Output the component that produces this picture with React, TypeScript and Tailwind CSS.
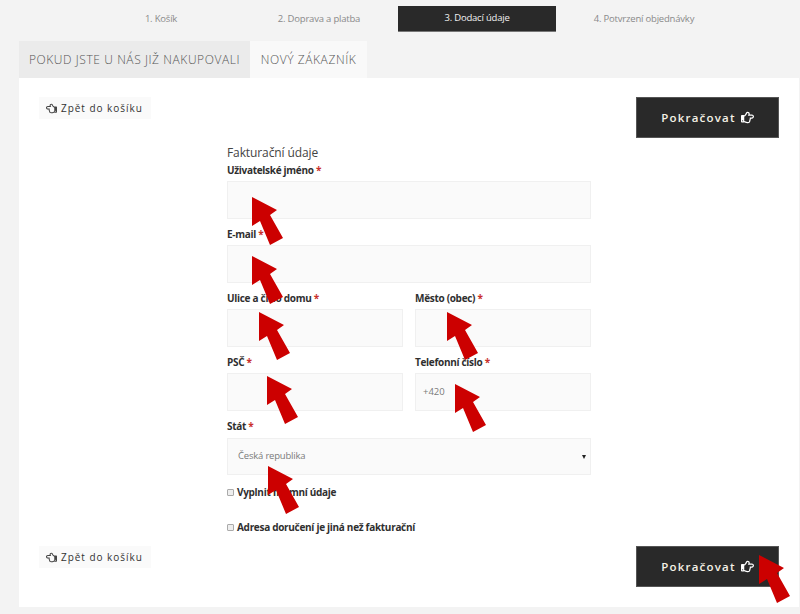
import { FC } from "react";
import { FaRegHandPointLeft, FaRegHandPointRight } from "react-icons/fa";

const font = { fontFamily: '"Open Sans", sans-serif' };

const BackLink: FC = () => (
  <a className="flex h-[22px] w-[112px] items-center gap-[4px] whitespace-nowrap bg-[#fafafa] pl-[7px] text-[10px] tracking-[0.96px] text-[#333]">
    <FaRegHandPointLeft className="h-[11px] w-[11px] shrink-0 text-[#444]" />
    <span>Zpět do košíku</span>
  </a>
);

const NextButton: FC = () => (
  <a className="flex h-[41px] w-[143px] items-center justify-center gap-[5px] border border-[#555] bg-[#292929] text-[11.5px] font-semibold tracking-[1.2px] text-[#f5f1e6]">
    <span>Pokračovat</span>
    <FaRegHandPointRight className="h-[13px] w-[13px] text-white" />
  </a>
);

const Field: FC<{ label: string; value?: string; className?: string }> = ({ label, value, className }) => (
  <div className={className}>
    <label className="block h-[16px] text-[10px] leading-[14px] font-bold tracking-[-0.3px] text-[#2f2f2f]">
      {label} <span className="text-[#c9302c]">*</span>
    </label>
    <div className="mt-[2px] flex h-[38px] items-center border border-[#f0f0f0] bg-[#fafafa] pl-[7px] pt-[1px] text-[9.5px] text-[#7a7a7a]">
      {value}
    </div>
  </div>
);

const Check: FC<{ label: string }> = ({ label }) => (
  <div className="flex h-[16px] items-center gap-[3px] text-[10px] leading-[14px] font-bold tracking-[-0.3px] text-[#2f2f2f]">
    <span className="h-[7px] w-[7px] rounded-[1px] border border-[#aaa] bg-[#eee]" />
    <span>{label}</span>
  </div>
);

const arrows = [
  [252, 197],
  [252, 256],
  [259, 312],
  [447, 312],
  [267, 376],
  [455, 384],
  [268, 466],
  [759, 555],
];

const App: FC = () => {
  return (
    <div className="relative h-[614px] w-[800px] overflow-hidden bg-[#f3f3f3]" style={font}>
      <div className="flex h-[41px] pl-[82px] pt-[6px] text-[9.5px] tracking-[-0.2px] text-[#8a8a8a]">
        <div className="flex h-[26px] w-[158px] items-center justify-center">1. Košík</div>
        <div className="flex h-[26px] w-[158px] items-center justify-center">2. Doprava a platba</div>
        <div className="flex h-[26px] w-[158px] items-center justify-center border-b border-[#777] bg-[#292929] text-[#f2f2f2]">
          3. Dodací údaje
        </div>
        <div className="flex h-[26px] w-[176px] items-center justify-center">4. Potvrzení objednávky</div>
      </div>

      <div className="ml-[19px] flex h-[37px] text-[12px] font-light tracking-[0.58px] uppercase text-[#555]">
        <div className="flex w-[231px] items-center justify-center bg-[#ebebeb]">Pokud jste u nás již nakupovali</div>
        <div className="flex w-[117px] items-center justify-center bg-[#f9f9f9]">Nový zákazník</div>
      </div>

      <div className="ml-[19px] h-[529px] w-[780px] bg-white px-[20px] pt-[19px]">
        <div className="flex items-start justify-between">
          <BackLink />
          <NextButton />
        </div>

        <div className="ml-[188px] mt-[5px] w-[364px]">
          <h3 className="h-[19px] text-[12px] leading-[19px] tracking-[-0.1px] text-[#444]">Fakturační údaje</h3>
          <div className="mt-[1px] flex flex-col gap-[8px]">
            <Field label="Uživatelské jméno" />
            <Field label="E-mail" />
            <div className="flex gap-[12px]">
              <Field label="Ulice a číslo domu" className="w-[176px]" />
              <Field label="Město (obec)" className="w-[176px]" />
            </div>
            <div className="flex gap-[12px]">
              <Field label="PSČ" className="w-[176px]" />
              <Field label="Telefonní číslo" value="+420" className="w-[176px]" />
            </div>
            <div>
              <label className="block h-[16px] text-[10px] leading-[14px] font-bold tracking-[-0.3px] text-[#2f2f2f]">
                Stát <span className="text-[#c9302c]">*</span>
              </label>
              <div className="mt-[3px] flex h-[37px] items-center justify-between border border-[#f0f0f0] bg-[#fafafa] pl-[10px] pr-[4px] text-[9.5px] tracking-[-0.2px] text-[#7a7a7a]">
                <span>Česká republika</span>
                <span className="h-0 w-0 border-x-[2.5px] border-t-[4px] border-x-transparent border-t-[#222]" />
              </div>
            </div>
          </div>
          <div className="mt-[9px] flex flex-col gap-[19px]">
            <Check label="Vyplnit firemní údaje" />
            <Check label="Adresa doručení je jiná než fakturační" />
          </div>
        </div>

        <div className="mt-[11px] flex items-start justify-between">
          <BackLink />
          <NextButton />
        </div>
      </div>

      {/* red annotation arrows lying over the form */}
      <svg className="absolute left-0 top-0 h-[614px] w-[800px]" viewBox="0 0 800 614">
        {arrows.map(([x, y]) => (
          <polygon
            key={`${x}-${y}`}
            transform={`translate(${x} ${y})`}
            points="0,0 25,13 18,18 31,41 18,48 8,24 0,29"
            fill="#cc0000"
          />
        ))}
      </svg>
    </div>
  );
};

export default App;
